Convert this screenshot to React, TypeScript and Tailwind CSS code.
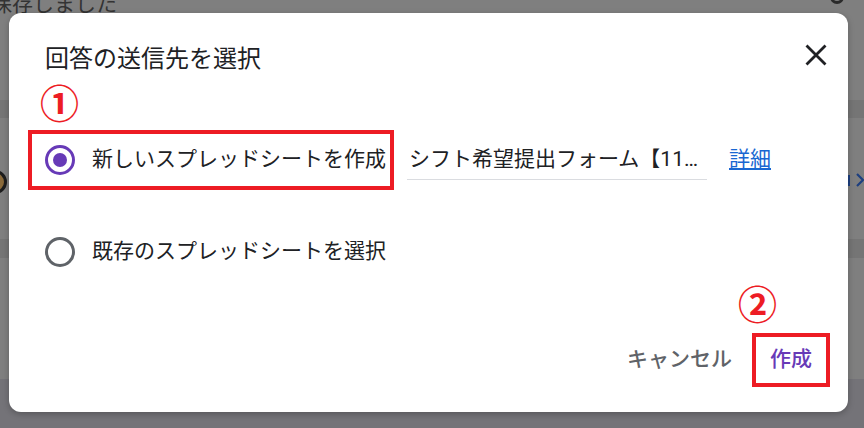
const Radio = ({ checked }: { checked: boolean }) => (
  <div
    className={`flex h-[30px] w-[30px] shrink-0 items-center justify-center rounded-full border-[3px] ${
      checked ? 'border-[#673ab7]' : 'border-[#5f6368]'
    }`}
  >
    {checked && <div className="h-[14px] w-[14px] rounded-full bg-[#673ab7]" />}
  </div>
);

const App = () => {
  return (
    <div className="relative h-[428px] w-[864px] overflow-hidden bg-[#7f7f7f] font-['Roboto','Noto_Sans_CJK_JP',sans-serif]">
      {/* dimmed page behind the dialog */}
      <div className="flex h-full flex-col">
        <div className="relative h-[100px]">
          <span className="absolute left-[-9px] top-[-11px] text-[21px] text-[#333]">保存しました</span>
          <div className="absolute right-[20px] top-[-14px] h-[18px] w-[14px] rounded-full border-[3px] border-[#2a2a2a]" />
        </div>
        <div className="h-[18px] bg-[#757575]" />
        <div className="relative h-[121px]">
          <div className="absolute left-[-17px] top-[52px] h-[24px] w-[24px] rounded-full border-[3px] border-[#1d1d1d] bg-[#8a6a3a]" />
          <div className="absolute right-[0px] top-[54px] flex items-center gap-[6px]">
            <div className="h-[11px] w-[2px] bg-[#1d3f80]" />
            <svg width="8" height="16" viewBox="0 0 8 16" fill="none">
              <path d="M1 2l6 6-6 6" stroke="#1d3f80" strokeWidth="2.2" />
            </svg>
          </div>
        </div>
        <div className="h-[19px] bg-[#757575]" />
        <div className="h-[121px]" />
        <div className="flex-1 bg-[#747378]" />
      </div>

      {/* dialog */}
      <div className="absolute left-[9px] top-[13px] flex h-[399px] w-[839px] flex-col rounded-[12px] bg-white shadow-[0_2px_6px_rgba(0,0,0,0.25)]">
        <div className="flex items-start justify-between pl-[36px] pr-[21px] pt-[30px]">
          <h1 className="text-[24px] leading-[32px] text-[#202124]">回答の送信先を選択</h1>
          <svg className="mt-[1px]" width="22" height="22" viewBox="0 0 22 22" fill="none">
            <path d="M1.5 1.5l19 19M20.5 1.5l-19 19" stroke="#202124" strokeWidth="2.8" />
          </svg>
        </div>

        <div className="ml-[31px] mt-[13px] h-[34px] text-[39px] font-bold leading-[34px] text-[#ed1c24]">①</div>

        {/* option 1 */}
        <div className="ml-[19px] mt-[8px] flex items-center">
          <div className="flex h-[60px] items-center border-4 border-[#ed1c24] pl-[13px] pr-[4px]">
            <Radio checked />
            <span className="ml-[17px] whitespace-nowrap text-[21px] text-[#202124]">新しいスプレッドシートを作成</span>
          </div>
          <div className="ml-[13px] flex h-[40px] w-[300px] items-center border-b border-[#dadce0] pl-[2px]">
            <span className="whitespace-nowrap text-[21px] text-[#202124]">シフト希望提出フォーム【11…</span>
          </div>
          <a className="ml-[22px] text-[21px] text-[#1967d2] underline">詳細</a>
        </div>

        {/* option 2 */}
        <div className="ml-[36px] mt-[32px] flex h-[60px] items-center">
          <Radio checked={false} />
          <span className="ml-[17px] whitespace-nowrap text-[21px] text-[#202124]">既存のスプレッドシートを選択</span>
        </div>

        {/* footer */}
        <div className="flex flex-col items-end">
          <div className="mr-[71px] mt-[8px] h-[32px] text-[39px] font-bold leading-[32px] text-[#ed1c24]">②</div>
          <div className="mr-[18px] mt-[11px] flex items-center">
            <span className="mr-[20px] text-[21px] font-medium text-[#5f6368]">キャンセル</span>
            <div className="flex h-[54px] items-center border-4 border-[#ed1c24] px-[14px]">
              <span className="text-[21px] font-medium text-[#673ab7]">作成</span>
            </div>
          </div>
        </div>
      </div>
    </div>
  );
};

export default App;
